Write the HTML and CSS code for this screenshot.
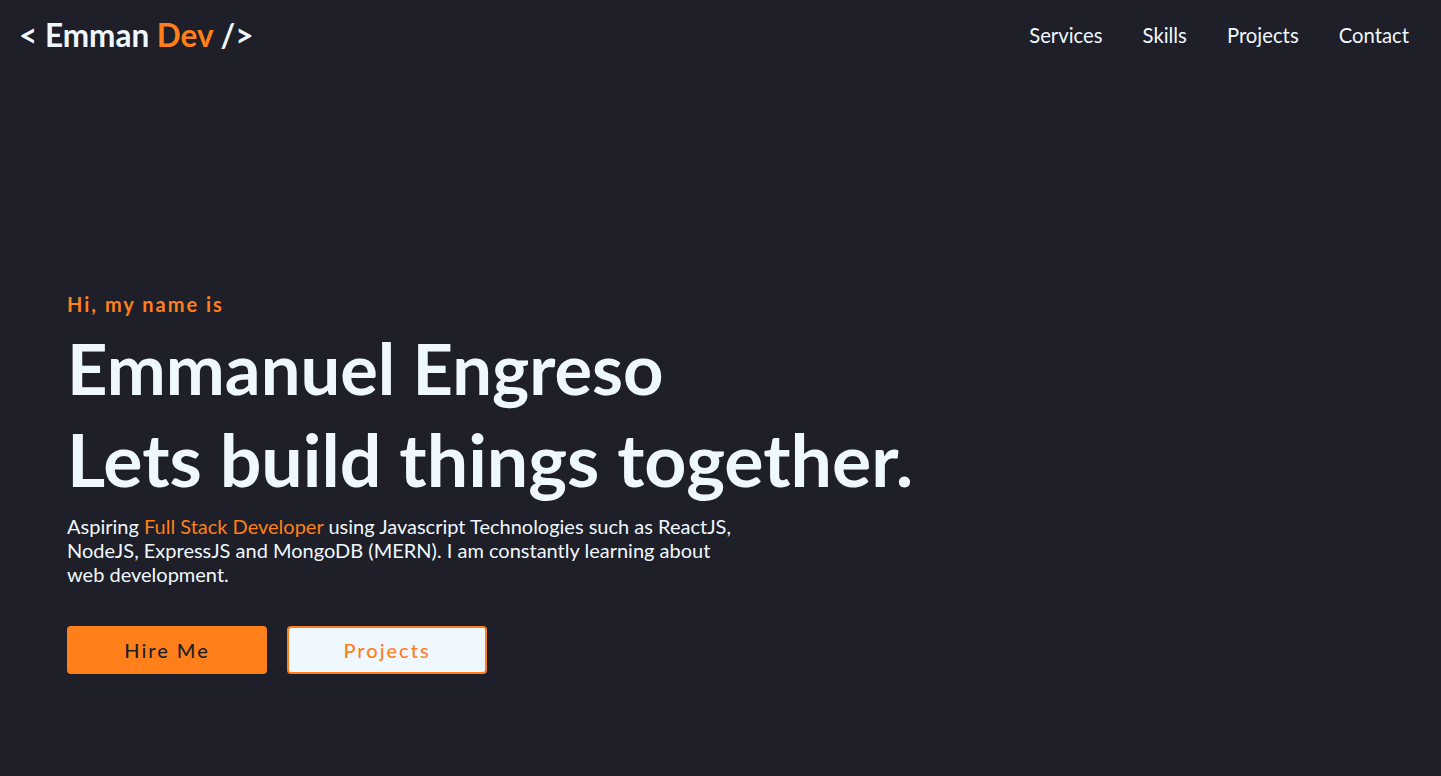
FILE: index.html
```html
<!DOCTYPE html>
<html lang="en">
<head>
<meta charset="utf-8">
<title>Emman Dev</title>
<link rel="stylesheet" href="styles.css">
</head>
<body>
<header class="nav">
  <a class="logo" href="#">&lt; Emman <span class="accent">Dev</span> /&gt;</a>
  <nav class="links">
    <a href="#">Services</a>
    <a href="#">Skills</a>
    <a href="#">Projects</a>
    <a href="#">Contact</a>
  </nav>
</header>
<main class="hero">
  <p class="intro">Hi, my name is</p>
  <h1 class="name">Emmanuel Engreso</h1>
  <h2 class="tagline">Lets build things together.</h2>
  <p class="desc">Aspiring <span class="accent">Full Stack Developer</span> using Javascript Technologies such as ReactJS, NodeJS, ExpressJS and MongoDB (MERN). I am constantly learning about web development.</p>
  <div class="actions">
    <a class="btn btn-primary" href="#">Hire Me</a>
    <a class="btn btn-outline" href="#">Projects</a>
  </div>
</main>
</body>
</html>
```
FILE: styles.css
```css
* { box-sizing: border-box; }
html, body { margin: 0; padding: 0; }
body {
  background: #1e1f28;
  color: #f0f8ff;
  font-family: Lato, "Open Sans", sans-serif;
  height: 776px;
  overflow: hidden;
}
a { color: inherit; text-decoration: none; }
.accent { color: #ff7f1b; }
.nav {
  display: flex;
  justify-content: space-between;
  align-items: center;
  padding: 0 32px 0 19px;
  height: 70px;
}
.logo {
  font-size: 31.5px;
  font-weight: 700;
}
.links {
  display: flex;
  gap: 40px;
  font-size: 20.3px;
}
.hero {
  padding: 222px 67px 0;
}
.intro {
  margin: 0;
  color: #ff7f1b;
  font-weight: 700;
  font-size: 20px;
  letter-spacing: 2px;
  line-height: 24px;
}
.name {
  margin: 9px 0 0;
  font-size: 70.5px;
  font-weight: 700;
  line-height: normal;
}
.tagline {
  margin: 4px 0 0;
  font-size: 73.5px;
  font-weight: 700;
  line-height: normal;
}
.desc {
  margin: 11px 0 0;
  max-width: 680px;
  font-size: 20px;
  line-height: 24px;
}
.actions {
  display: flex;
  gap: 20px;
  margin-top: 40px;
}
.btn {
  width: 200px;
  height: 48px;
  display: flex;
  align-items: center;
  justify-content: center;
  border-radius: 4px;
  font-size: 20px;
  font-weight: 500;
  letter-spacing: 2px;
}
.btn-primary {
  background: #ff7f1b;
  color: #1e1f28;
}
.btn-outline {
  background: #f0f8ff;
  color: #ff7f1b;
  border: 2px solid #ff7f1b;
}
```
